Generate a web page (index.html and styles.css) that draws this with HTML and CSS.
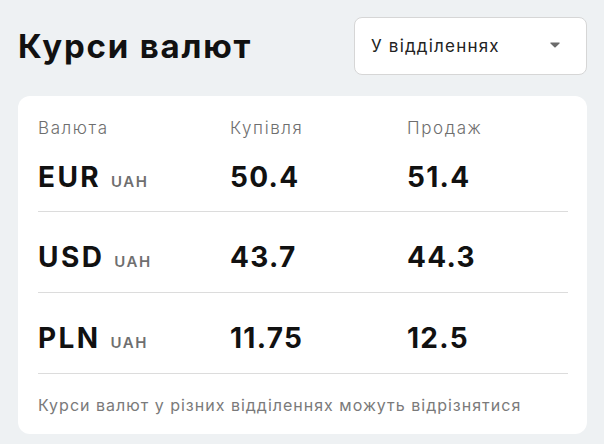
FILE: index.html
```html
<!DOCTYPE html>
<html lang="uk">
<head>
<meta charset="utf-8">
<link rel="stylesheet" href="styles.css">
</head>
<body>
<div class="page">
  <header class="top">
    <h1 class="title">Курси валют</h1>
    <div class="select">
      <span>У відділеннях</span>
      <svg class="caret" width="10" height="6" viewBox="0 0 10 6"><path d="M1 0.5h8c0.6 0 0.9 0.6 0.5 1L5.6 5.3c-0.3 0.3-0.9 0.3-1.2 0L0.5 1.5C0.1 1.1 0.4 0.5 1 0.5z" fill="#6b6b6b"/></svg>
    </div>
  </header>
  <section class="card">
    <div class="grid head">
      <span>Валюта</span><span>Купівля</span><span>Продаж</span>
    </div>
    <div class="grid row first">
      <span class="cur">EUR<small>UAH</small></span><span class="val">50.4</span><span class="val">51.4</span>
    </div>
    <div class="grid row">
      <span class="cur">USD<small>UAH</small></span><span class="val">43.7</span><span class="val">44.3</span>
    </div>
    <div class="grid row">
      <span class="cur">PLN<small>UAH</small></span><span class="val">11.75</span><span class="val">12.5</span>
    </div>
    <p class="note">Курси валют у різних відділеннях можуть відрізнятися</p>
  </section>
</div>
</body>
</html>
```

FILE: styles.css
```css
html, body {
  margin: 0;
  background: #eef1f3;
}
body {
  font-family: Inter, "Noto Sans", sans-serif;
  color: #111;
}
.page {
  padding: 17px 17px 0 18px;
}
.top {
  display: flex;
  justify-content: space-between;
  align-items: center;
}
.title {
  margin: 0;
  font-size: 33px;
  font-weight: 700;
  letter-spacing: 1.8px;
  color: #111;
}
.select {
  box-sizing: border-box;
  width: 233px;
  height: 58px;
  background: #fff;
  border: 1px solid #d6d6d6;
  border-radius: 8px;
  display: flex;
  align-items: center;
  justify-content: space-between;
  padding: 0 26px 0 16px;
  font-size: 17px;
  letter-spacing: 1.2px;
  color: #222;
}
.caret { display: block; margin-top: -2px; }
.card {
  margin-top: 21px;
  background: #fff;
  border-radius: 12px;
  padding: 0 19px 0 20px;
}
.grid {
  display: grid;
  grid-template-columns: 192px 177px 1fr;
  align-items: center;
}
.head {
  padding-top: 22px;
  line-height: 20px;
  font-size: 17px;
  font-weight: 300;
  letter-spacing: 1.6px;
  color: #6e6e6e;
}
.row {
  padding: 33px 0 23px;
  border-bottom: 1px solid #dcdcdc;
}
.row > span {
  line-height: 24px;
  height: 24px;
}
.row.first { padding-top: 27px; padding-bottom: 22px; }
.cur {
  font-size: 28px;
  font-weight: 700;
  letter-spacing: 2.4px;
}
.cur small {
  font-size: 15px;
  font-weight: 600;
  line-height: 0;
  letter-spacing: 1.5px;
  color: #6f6f6f;
  margin-left: 10px;
}
.val {
  font-size: 28px;
  font-weight: 700;
  letter-spacing: 1.3px;
}
.note {
  margin: 0;
  padding: 20px 0 18px;
  line-height: 22px;
  font-size: 16px;
  letter-spacing: 1px;
  color: #7a7a7a;
}
```
